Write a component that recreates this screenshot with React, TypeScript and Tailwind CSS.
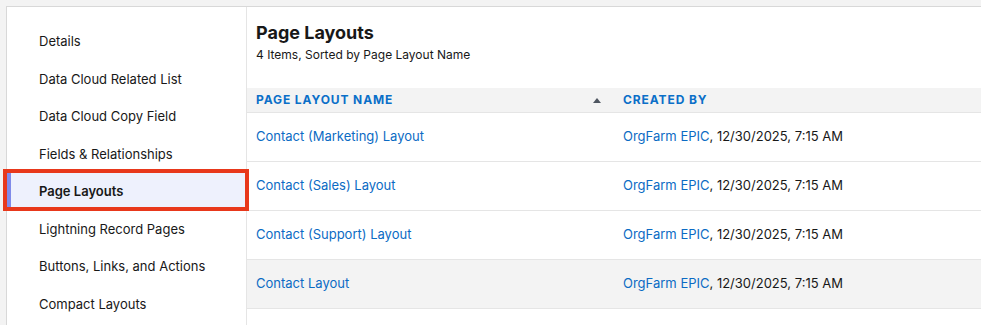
import React from 'react';

const navItems = [
  'Details',
  'Data Cloud Related List',
  'Data Cloud Copy Field',
  'Fields & Relationships',
  'Page Layouts',
  'Lightning Record Pages',
  'Buttons, Links, and Actions',
  'Compact Layouts',
];

const layouts = [
  'Contact (Marketing) Layout',
  'Contact (Sales) Layout',
  'Contact (Support) Layout',
  'Contact Layout',
];

const App = () => {
  const active = 'Page Layouts';

  return (
    <div
      className="relative w-[981px] h-[325px] overflow-hidden bg-[#f3f3f3] pt-[6px] pl-[6px] text-[#181818]"
      style={{ fontFamily: 'Inter, "Liberation Sans", Arial, sans-serif' }}
    >
      <div className="flex h-[400px] bg-white border-l border-t border-[#d8d8d8]">
        {/* Sidebar nav */}
        <aside className="w-[240px] shrink-0 border-r border-[#e5e5e5] pt-[16px]">
          {navItems.map((item) => {
            const isActive = item === active;
            return (
              <div
                key={item}
                className={
                  isActive
                    ? 'relative flex items-center h-[37.5px] pl-[32px] text-[13px] font-semibold bg-[#eef1fd]'
                    : 'flex items-center h-[37.5px] pl-[32px] text-[13px]'
                }
              >
                {isActive && <span className="absolute left-0 top-0 bottom-0 w-[4px] bg-[#7f8ae9]" />}
                {item}
              </div>
            );
          })}
        </aside>

        {/* List view */}
        <main className="flex-1">
          <div className="pt-[14px] pl-[9px]">
            <h1 className="text-[18px] leading-[24px] font-bold">Page Layouts</h1>
            <p className="mt-[2px] text-[12px] leading-[16px]">4 Items, Sorted by Page Layout Name</p>
          </div>

          <div className="mt-[25px]">
            <div className="flex h-[25px] bg-[#f3f3f3] border-b border-[#e5e5e5] text-[12px] font-bold tracking-[0.9px] text-[#0b6fc8]">
              <div className="w-[367px] flex items-center justify-between pl-[9px] pr-[13px]">
                <span>PAGE LAYOUT NAME</span>
                <svg width="8" height="5" viewBox="0 0 8 5">
                  <path d="M4 0L8 5H0z" fill="#4f5661" />
                </svg>
              </div>
              <div className="flex-1 flex items-center pl-[9px]">CREATED BY</div>
            </div>

            {layouts.map((name, i) => (
              <div
                key={name}
                className={
                  i === 3
                    ? 'flex h-[49px] border-b border-[#e5e5e5] text-[13px] bg-[#f3f3f3]'
                    : 'flex h-[49px] border-b border-[#e5e5e5] text-[13px]'
                }
              >
                <div className="w-[367px] flex items-center pl-[9px] text-[#0b6bc4]">{name}</div>
                <div className="flex-1 flex items-center pl-[9px]">
                  <span className="text-[#0b6bc4]">OrgFarm EPIC</span>
                  <span>, 12/30/2025, 7:15 AM</span>
                </div>
              </div>
            ))}
          </div>
        </main>
      </div>

      {/* annotation highlight */}
      <div className="absolute left-[3px] top-[169px] w-[246px] h-[42px] border-[4px] border-[#e8381b] pointer-events-none" />
    </div>
  );
};

export default App;
